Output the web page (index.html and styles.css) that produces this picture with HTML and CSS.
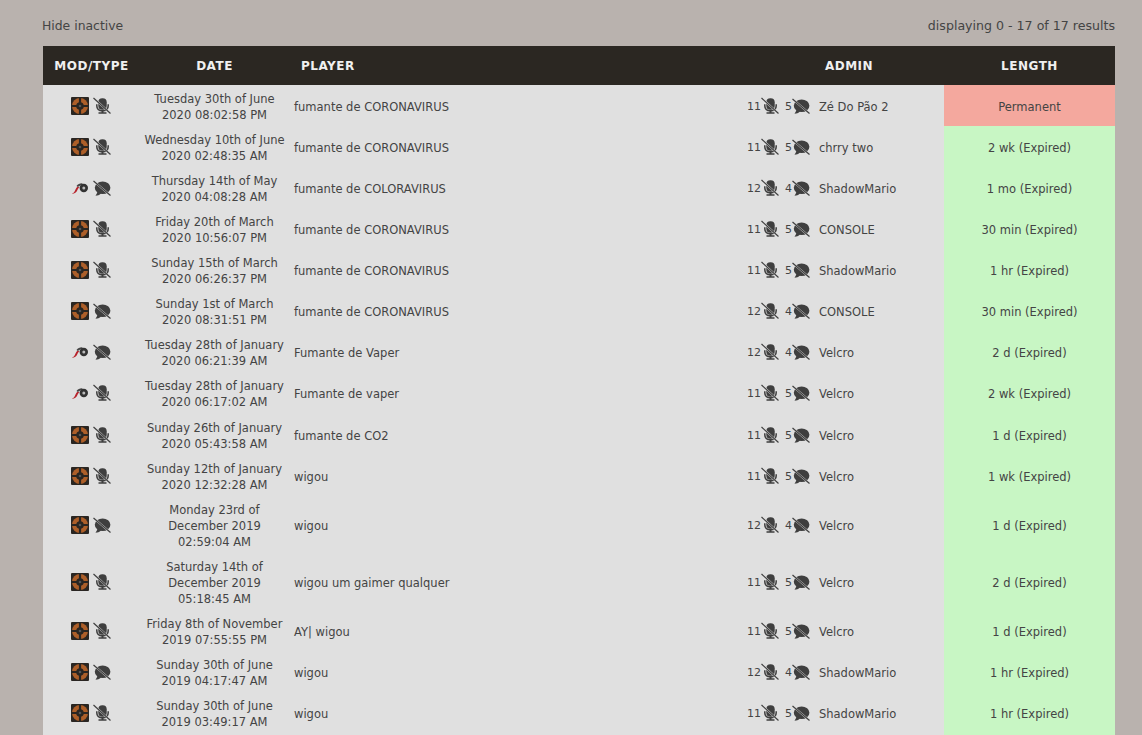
FILE: index.html
```html
<!DOCTYPE html>
<html lang="en">
<head>
<meta charset="utf-8">
<title>Bans</title>
<link rel="stylesheet" href="styles.css">
</head>
<body>
<svg class="defs" width="0" height="0" aria-hidden="true">
  <symbol id="tf" viewBox="0 0 18 18">
    <rect width="18" height="18" rx="1" fill="#2a2622"/>
    <circle cx="9" cy="9" r="8" fill="#ad5f29"/>
    <circle cx="9" cy="9" r="3.800" fill="#2a2622"/>
    <path d="M7.900 0.500h2.200v17h-2.200zM0.500 7.900h17v2.200h-17z" fill="#2a2622"/>
    <circle cx="9" cy="9" r="1.300" fill="#555"/>
  </symbol>
  <symbol id="l4" viewBox="0 0 18 18">
    <path d="M1 14.500c2-.4 2.800-2.200 3.500-4 .5-1.300 1.200-2.300 2.300-3l1.500 1c-1 .6-1.500 1.600-2 2.800-.9 2.100-2.500 3.500-5.300 3.500z" fill="#b8232c"/>
    <path d="M5.500 7c1.500-1.800 3.500-2.800 6-2.600l-.3 1.800c-1.800 0-3.200.6-4.200 1.800z" fill="#444"/>
    <circle cx="12.800" cy="9" r="4.200" fill="#333"/>
    <circle cx="12.800" cy="9" r="1.500" fill="#bbb"/>
  </symbol>
  <symbol id="mic" viewBox="0 0 18 18">
    <rect x="5.300" y="1.300" width="8.400" height="11.400" rx="4" fill="#3f3f3f"/>
    <path d="M3.800 7.200v1.600c0 3 2.300 5 5.700 5s5.700-2 5.700-5V7.200" fill="none" stroke="#3f3f3f" stroke-width="1.500"/>
    <path d="M8.500 13.500h2v1.700h3v1.500H5.500v-1.500h3z" fill="#3f3f3f"/>
    <path d="M0.500 1l17 15.500" stroke="#e0e0e0" stroke-width="1.900" fill="none"/>
    <path d="M0.500 1l17 15.500" stroke="#3f3f3f" stroke-width="1.200" fill="none"/>
  </symbol>
  <symbol id="chat" viewBox="0 0 18 18">
    <ellipse cx="9.600" cy="8.800" rx="7.800" ry="6.300" fill="#3f3f3f"/>
    <path d="M5 12.500L2.500 16.800c2 0 4-.8 5.500-2.200z" fill="#3f3f3f"/>
    <path d="M0.500 2l17 14.500" stroke="#e0e0e0" stroke-width="1.900" fill="none"/>
    <path d="M0.500 2l17 14.500" stroke="#3f3f3f" stroke-width="1.200" fill="none"/>
  </symbol>
</svg>
<main class="page">
  <div class="topbar">
    <span>Hide inactive</span>
    <span class="results">displaying 0 - 17 of 17 results</span>
  </div>
  <table class="bans">
    <colgroup>
      <col class="c-mod"><col class="c-date"><col class="c-player"><col class="c-counts"><col class="c-admin"><col class="c-length">
    </colgroup>
    <thead>
      <tr>
        <th>MOD/TYPE</th>
        <th>DATE</th>
        <th class="th-player">PLAYER</th>
        <th class="th-admin" colspan="2">ADMIN</th>
        <th>LENGTH</th>
      </tr>
    </thead>
    <tbody>
      <tr><td class="mod"><svg class="ic"><use href="#tf"/></svg><svg class="ic"><use href="#mic"/></svg></td><td class="date">Tuesday 30th of June<br>2020 08:02:58 PM</td><td>fumante de CORONAVIRUS</td><td class="counts">11<svg class="ic"><use href="#mic"/></svg><span class="n2">5</span><svg class="ic"><use href="#chat"/></svg></td><td class="admin">Zé Do Pão 2</td><td class="len perm">Permanent</td></tr>
      <tr><td class="mod"><svg class="ic"><use href="#tf"/></svg><svg class="ic"><use href="#mic"/></svg></td><td class="date">Wednesday 10th of June<br>2020 02:48:35 AM</td><td>fumante de CORONAVIRUS</td><td class="counts">11<svg class="ic"><use href="#mic"/></svg><span class="n2">5</span><svg class="ic"><use href="#chat"/></svg></td><td class="admin">chrry two</td><td class="len exp">2 wk (Expired)</td></tr>
      <tr><td class="mod"><svg class="ic"><use href="#l4"/></svg><svg class="ic"><use href="#chat"/></svg></td><td class="date">Thursday 14th of May<br>2020 04:08:28 AM</td><td>fumante de COLORAVIRUS</td><td class="counts">12<svg class="ic"><use href="#mic"/></svg><span class="n2">4</span><svg class="ic"><use href="#chat"/></svg></td><td class="admin">ShadowMario</td><td class="len exp">1 mo (Expired)</td></tr>
      <tr><td class="mod"><svg class="ic"><use href="#tf"/></svg><svg class="ic"><use href="#mic"/></svg></td><td class="date">Friday 20th of March<br>2020 10:56:07 PM</td><td>fumante de CORONAVIRUS</td><td class="counts">11<svg class="ic"><use href="#mic"/></svg><span class="n2">5</span><svg class="ic"><use href="#chat"/></svg></td><td class="admin">CONSOLE</td><td class="len exp">30 min (Expired)</td></tr>
      <tr><td class="mod"><svg class="ic"><use href="#tf"/></svg><svg class="ic"><use href="#mic"/></svg></td><td class="date">Sunday 15th of March<br>2020 06:26:37 PM</td><td>fumante de CORONAVIRUS</td><td class="counts">11<svg class="ic"><use href="#mic"/></svg><span class="n2">5</span><svg class="ic"><use href="#chat"/></svg></td><td class="admin">ShadowMario</td><td class="len exp">1 hr (Expired)</td></tr>
      <tr><td class="mod"><svg class="ic"><use href="#tf"/></svg><svg class="ic"><use href="#chat"/></svg></td><td class="date">Sunday 1st of March<br>2020 08:31:51 PM</td><td>fumante de CORONAVIRUS</td><td class="counts">12<svg class="ic"><use href="#mic"/></svg><span class="n2">4</span><svg class="ic"><use href="#chat"/></svg></td><td class="admin">CONSOLE</td><td class="len exp">30 min (Expired)</td></tr>
      <tr><td class="mod"><svg class="ic"><use href="#l4"/></svg><svg class="ic"><use href="#chat"/></svg></td><td class="date">Tuesday 28th of January<br>2020 06:21:39 AM</td><td>Fumante de Vaper</td><td class="counts">12<svg class="ic"><use href="#mic"/></svg><span class="n2">4</span><svg class="ic"><use href="#chat"/></svg></td><td class="admin">Velcro</td><td class="len exp">2 d (Expired)</td></tr>
      <tr><td class="mod"><svg class="ic"><use href="#l4"/></svg><svg class="ic"><use href="#mic"/></svg></td><td class="date">Tuesday 28th of January<br>2020 06:17:02 AM</td><td>Fumante de vaper</td><td class="counts">11<svg class="ic"><use href="#mic"/></svg><span class="n2">5</span><svg class="ic"><use href="#chat"/></svg></td><td class="admin">Velcro</td><td class="len exp">2 wk (Expired)</td></tr>
      <tr><td class="mod"><svg class="ic"><use href="#tf"/></svg><svg class="ic"><use href="#mic"/></svg></td><td class="date">Sunday 26th of January<br>2020 05:43:58 AM</td><td>fumante de CO2</td><td class="counts">11<svg class="ic"><use href="#mic"/></svg><span class="n2">5</span><svg class="ic"><use href="#chat"/></svg></td><td class="admin">Velcro</td><td class="len exp">1 d (Expired)</td></tr>
      <tr><td class="mod"><svg class="ic"><use href="#tf"/></svg><svg class="ic"><use href="#mic"/></svg></td><td class="date">Sunday 12th of January<br>2020 12:32:28 AM</td><td>wigou</td><td class="counts">11<svg class="ic"><use href="#mic"/></svg><span class="n2">5</span><svg class="ic"><use href="#chat"/></svg></td><td class="admin">Velcro</td><td class="len exp">1 wk (Expired)</td></tr>
      <tr><td class="mod"><svg class="ic"><use href="#tf"/></svg><svg class="ic"><use href="#chat"/></svg></td><td class="date">Monday 23rd of<br>December 2019<br>02:59:04 AM</td><td>wigou</td><td class="counts">12<svg class="ic"><use href="#mic"/></svg><span class="n2">4</span><svg class="ic"><use href="#chat"/></svg></td><td class="admin">Velcro</td><td class="len exp">1 d (Expired)</td></tr>
      <tr><td class="mod"><svg class="ic"><use href="#tf"/></svg><svg class="ic"><use href="#mic"/></svg></td><td class="date">Saturday 14th of<br>December 2019<br>05:18:45 AM</td><td>wigou um gaimer qualquer</td><td class="counts">11<svg class="ic"><use href="#mic"/></svg><span class="n2">5</span><svg class="ic"><use href="#chat"/></svg></td><td class="admin">Velcro</td><td class="len exp">2 d (Expired)</td></tr>
      <tr><td class="mod"><svg class="ic"><use href="#tf"/></svg><svg class="ic"><use href="#mic"/></svg></td><td class="date">Friday 8th of November<br>2019 07:55:55 PM</td><td>AY| wigou</td><td class="counts">11<svg class="ic"><use href="#mic"/></svg><span class="n2">5</span><svg class="ic"><use href="#chat"/></svg></td><td class="admin">Velcro</td><td class="len exp">1 d (Expired)</td></tr>
      <tr><td class="mod"><svg class="ic"><use href="#tf"/></svg><svg class="ic"><use href="#chat"/></svg></td><td class="date">Sunday 30th of June<br>2019 04:17:47 AM</td><td>wigou</td><td class="counts">12<svg class="ic"><use href="#mic"/></svg><span class="n2">4</span><svg class="ic"><use href="#chat"/></svg></td><td class="admin">ShadowMario</td><td class="len exp">1 hr (Expired)</td></tr>
      <tr><td class="mod"><svg class="ic"><use href="#tf"/></svg><svg class="ic"><use href="#mic"/></svg></td><td class="date">Sunday 30th of June<br>2019 03:49:17 AM</td><td>wigou</td><td class="counts">11<svg class="ic"><use href="#mic"/></svg><span class="n2">5</span><svg class="ic"><use href="#chat"/></svg></td><td class="admin">ShadowMario</td><td class="len exp">1 hr (Expired)</td></tr>
      <tr class="filler"><td colspan="5"></td><td class="exp"></td></tr>
    </tbody>
  </table>
</main>
</body>
</html>
```
FILE: styles.css
```css
html, body { margin: 0; padding: 0; }
html { overflow: hidden; height: 735px; }
body {
  background: #b9b2ae;
  color: #444;
  font-family: "DejaVu Sans", Verdana, sans-serif;
  font-size: 11.5px;
}
.defs { display: block; height: 0; }
.page { padding: 0 27px 0 42px; }
.topbar {
  display: flex;
  justify-content: space-between;
  height: 46px;
  padding-top: 18px;
  box-sizing: border-box;
  font-size: 12.4px;
  line-height: 16px;
}
.results { font-size: 12.6px; }
.bans {
  border-collapse: collapse;
  table-layout: fixed;
  width: 1072px;
  margin-left: 1px;
  background: #e0e0e0;
}
.c-mod { width: 97px; }
.c-date { width: 149px; }
.c-counts { width: 67px; }
.c-admin { width: 130px; }
.c-length { width: 171px; }
th {
  background: #2b2722;
  color: #f0f0f0;
  height: 38px;
  padding: 1px 0 0;
  font-size: 12px;
  font-weight: bold;
  letter-spacing: 0.5px;
  text-align: center;
}
th.th-player { text-align: left; padding-left: 12px; }
th.th-admin { padding-left: 7px; }
td {
  padding: 5.5px 5px 3.64px;
  line-height: 16px;
  vertical-align: middle;
}
td.mod, td.date, td.len { text-align: center; }
td.date { padding-left: 0; padding-right: 0; }
td.mod { padding: 0 1px 0 0; }
td.counts { padding: 0; font-size: 11px; white-space: nowrap; }
td.admin { padding-left: 5px; }
.ic { width: 18px; height: 18px; vertical-align: middle; }
.counts .ic { vertical-align: -5px; }
.mod .ic + .ic { margin-left: 4px; }
.n2 { margin-left: 6px; }
.perm { background: #f4a89e; }
.exp { background: #c8f6c4; }
.filler td { height: 32px; }
```
